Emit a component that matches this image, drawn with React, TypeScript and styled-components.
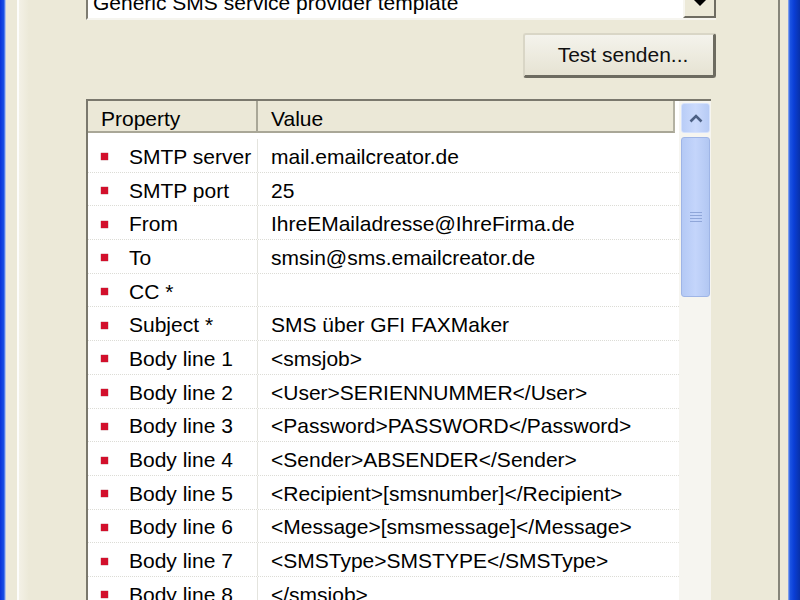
import React from 'react'
import styled, { createGlobalStyle } from 'styled-components'

const GlobalStyle = createGlobalStyle`
  html, body {
    margin: 0;
    padding: 0;
    background: #ece9d8;
    overflow: hidden;
  }
  body {
    font-family: 'Liberation Sans', Arial, sans-serif;
  }
`

const Window = styled.div`
  display: flex;
  width: 800px;
  height: 600px;
  overflow: hidden;
`

const FrameLeft = styled.div`
  width: 6px;
  background: linear-gradient(to right, #0831d9 0, #1a52e6 4px, #8aa8ee 5px, #d8dcec 6px);
`

const FrameRight = styled.div`
  width: 12px;
  background: linear-gradient(to right, #9cb4ec 0, #1c55e4 2px, #0a3ed6 6px, #0831a8 12px);
`

const Client = styled.div`
  flex: 1;
  display: flex;
  background: #ece9d8;
  padding: 0 8px 0 11px;
`

const TabPage = styled.div`
  flex: 1;
  display: flex;
  flex-direction: column;
  padding: 0 62px 0 67px;
  border-left: 2px solid #fdfdfb;
  border-right: 2px solid #86857a;
  background: linear-gradient(to right, #f3f1e6 0, #ece9d8 10px);
`

const Content = styled.div`
  margin-top: -16px;
  display: flex;
  flex-direction: column;
`

const Combo = styled.div`
  display: flex;
  height: 36px;
  background: #fff;
  border-left: 2px solid #7e7c72;
  border-bottom: 2px solid #f6f5ef;
  box-sizing: border-box;
`

const ComboText = styled.div`
  flex: 1;
  padding: 7px 0 0 5px;
  font-size: 21px;
  color: #000;
  white-space: nowrap;
`

const ComboButton = styled.div`
  width: 33px;
  display: flex;
  align-items: flex-start;
  justify-content: center;
  padding-top: 13px;
  box-sizing: border-box;
  background: #ece9d8;
  border-left: 2px solid #f7f6f0;
  border-right: 2px solid #6e6c62;
  border-bottom: 2px solid #6e6c62;
`

const ButtonRow = styled.div`
  display: flex;
  justify-content: flex-end;
  margin-top: 13px;
`

const PushButton = styled.div`
  width: 193px;
  height: 45px;
  box-sizing: border-box;
  display: flex;
  align-items: center;
  justify-content: center;
  padding-left: 8px;
  font-size: 21px;
  color: #111;
  border-radius: 3px;
  border-top: 2px solid #d9d6c6;
  border-left: 2px solid #d9d6c6;
  border-right: 3px solid #6d6b60;
  border-bottom: 3px solid #6d6b60;
  background: linear-gradient(to bottom, #f4f3ec, #e6e3d3);
`

const Table = styled.div`
  display: flex;
  margin-top: 21px;
  margin-right: 5px;
  height: 520px;
  border-top: 2px solid #7a786d;
  border-left: 2px solid #7a786d;
  background: #fff;
`

const Grid = styled.div`
  flex: 1;
  display: flex;
  flex-direction: column;
`

const HeaderRow = styled.div`
  display: flex;
  height: 34px;
  box-sizing: border-box;
  background: #ebe8d7;
  border-bottom: 2px solid #a9a797;
  border-right: 2px solid #b3b1a2;
  margin-right: 4px;
`

const HeaderCell = styled.div<{ $w?: number }>`
  ${p => (p.$w ? `width: ${p.$w}px;` : 'flex: 1;')}
  box-sizing: border-box;
  padding: 6px 0 0 13px;
  font-size: 21px;
  color: #000;
  ${p => (p.$w ? 'border-right: 2px solid #a9a797;' : '')}
`

const Rows = styled.div`
  padding-top: 6px;
`

const Row = styled.div`
  display: flex;
  height: 33.7px;
  box-sizing: border-box;
  border-bottom: 1px dotted #dcdcd6;
  font-size: 21px;
  color: #000;
  padding-top: 3px;
`

const NameCell = styled.div`
  width: 170px;
  display: flex;
  align-items: center;
  padding-left: 13px;
  box-sizing: border-box;
  border-right: 1px solid #e4e4de;
  margin-top: -3px;
  padding-top: 3px;
  white-space: nowrap;
`

const Bullet = styled.span`
  width: 7px;
  height: 7px;
  margin-right: 21px;
  background: #d2102c;
  box-shadow: 0 0 1px #8a0a1a;
  flex: none;
`

const ValueCell = styled.div`
  flex: 1;
  display: flex;
  align-items: center;
  padding-left: 13px;
  white-space: nowrap;
`

const ScrollBar = styled.div`
  width: 32px;
  box-sizing: border-box;
  padding: 2px 1px 0 2px;
  display: flex;
  flex-direction: column;
  gap: 4px;
  background: #f6f5f0;
`

const ScrollButton = styled.div`
  height: 30px;
  border-radius: 3px;
  display: flex;
  align-items: center;
  justify-content: center;
  background: linear-gradient(to right, #b9cdf7, #cbdafc 50%, #b7cbf5);
  border: 1px solid #d6e2fc;
  box-sizing: border-box;
`

const Thumb = styled.div`
  height: 160px;
  border-radius: 3px;
  display: flex;
  align-items: center;
  justify-content: center;
  background: linear-gradient(to right, #b4c9f5, #c4d5fb 50%, #b2c7f2);
  border: 1px solid #9fb5e6;
  box-sizing: border-box;
`

const rows: [string, string][] = [
  ['SMTP server', 'mail.emailcreator.de'],
  ['SMTP port', '25'],
  ['From', 'IhreEMailadresse@IhreFirma.de'],
  ['To', 'smsin@sms.emailcreator.de'],
  ['CC *', ''],
  ['Subject *', 'SMS über GFI FAXMaker'],
  ['Body line 1', '<smsjob>'],
  ['Body line 2', '<User>SERIENNUMMER</User>'],
  ['Body line 3', '<Password>PASSWORD</Password>'],
  ['Body line 4', '<Sender>ABSENDER</Sender>'],
  ['Body line 5', '<Recipient>[smsnumber]</Recipient>'],
  ['Body line 6', '<Message>[smsmessage]</Message>'],
  ['Body line 7', '<SMSType>SMSTYPE</SMSType>'],
  ['Body line 8', '</smsjob>'],
  ['Body line 9', ''],
]

const App: React.FC = () => {
  return (
    <>
      <GlobalStyle />
      <Window>
        <FrameLeft />
        <Client>
          <TabPage>
            <Content>
              <Combo>
                <ComboText>Generic SMS service provider template</ComboText>
                <ComboButton>
                  <svg width="18" height="9" viewBox="0 0 18 9">
                    <path d="M0 0 H18 L9 9 Z" fill="#000" />
                  </svg>
                </ComboButton>
              </Combo>
              <ButtonRow>
                <PushButton>Test senden...</PushButton>
              </ButtonRow>
              <Table>
                <Grid>
                  <HeaderRow>
                    <HeaderCell $w={170}>Property</HeaderCell>
                    <HeaderCell>Value</HeaderCell>
                  </HeaderRow>
                  <Rows>
                    {rows.map(([name, value]) => (
                      <Row key={name}>
                        <NameCell>
                          <Bullet />
                          {name}
                        </NameCell>
                        <ValueCell>{value}</ValueCell>
                      </Row>
                    ))}
                  </Rows>
                </Grid>
                <ScrollBar>
                  <ScrollButton>
                    <svg width="14" height="9" viewBox="0 0 14 9">
                      <path d="M1.5 7.5 L7 2 L12.5 7.5" fill="none" stroke="#4d6185" strokeWidth="2.6" />
                    </svg>
                  </ScrollButton>
                  <Thumb>
                    <svg width="12" height="12" viewBox="0 0 12 12">
                      <path d="M0 1.5 H12 M0 4.5 H12 M0 7.5 H12 M0 10.5 H12" stroke="#8fa6d9" strokeWidth="1" />
                    </svg>
                  </Thumb>
                </ScrollBar>
              </Table>
            </Content>
          </TabPage>
        </Client>
        <FrameRight />
      </Window>
    </>
  )
}

export default App
